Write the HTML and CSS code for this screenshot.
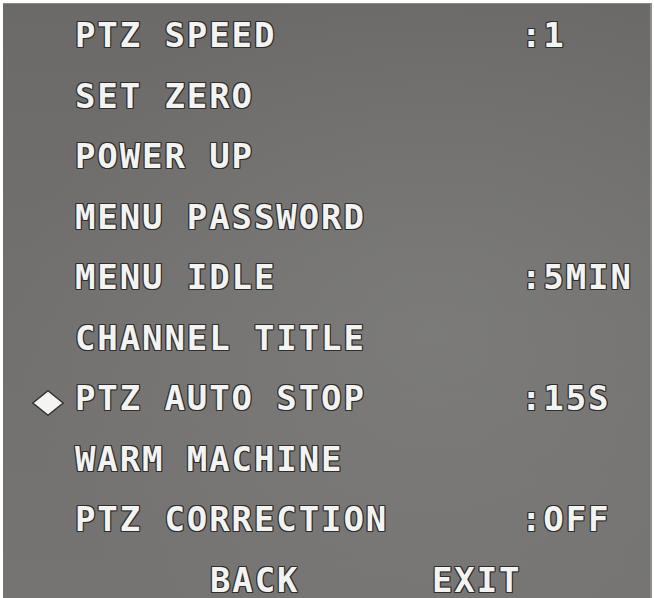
FILE: index.html
```html
<!DOCTYPE html>
<html>
<head>
<meta charset="utf-8">
<link rel="stylesheet" href="styles.css">
</head>
<body>
<div class="screen">
  <div class="menu">
    <div class="row"><span class="mark"></span><span class="label">PTZ SPEED</span><span class="value">:1</span></div>
    <div class="row"><span class="mark"></span><span class="label">SET ZERO</span><span class="value"></span></div>
    <div class="row"><span class="mark"></span><span class="label">POWER UP</span><span class="value"></span></div>
    <div class="row"><span class="mark"></span><span class="label">MENU PASSWORD</span><span class="value"></span></div>
    <div class="row"><span class="mark"></span><span class="label">MENU IDLE</span><span class="value">:5MIN</span></div>
    <div class="row"><span class="mark"></span><span class="label">CHANNEL TITLE</span><span class="value"></span></div>
    <div class="row selected"><span class="mark"><svg class="diamond" width="32" height="26" viewBox="0 0 32 26"><polygon points="16,0.8 31.2,13 16,25.2 0.8,13" fill="#f4f4f2" stroke="#2e2e2e" stroke-width="1.4" stroke-linejoin="round"/></svg></span><span class="label">PTZ AUTO STOP</span><span class="value">:15S</span></div>
    <div class="row"><span class="mark"></span><span class="label">WARM MACHINE</span><span class="value"></span></div>
    <div class="row"><span class="mark"></span><span class="label">PTZ CORRECTION</span><span class="value">:OFF</span></div>
    <div class="footer"><span class="btn back">BACK</span><span class="btn exit">EXIT</span></div>
  </div>
</div>
</body>
</html>
```

FILE: styles.css
```css
html, body {
  margin: 0;
  padding: 0;
  background: #ffffff;
}
body {
  width: 654px;
  height: 598px;
  overflow: hidden;
}
.screen {
  margin: 3px 0 0 3px;
  width: 649px;
  height: 595px;
  box-sizing: border-box;
  border-top: 1px solid #8a8a88;
  border-right: 2px solid #8e8e8c;
  background:
    radial-gradient(ellipse 420px 360px at 430px 330px, rgba(135,135,133,0.45), rgba(135,135,133,0) 100%),
    linear-gradient(180deg, #6b6a68 0%, #71706e 45%, #757472 100%);
  overflow: hidden;
}
.menu {
  padding-top: 1px;
  font-family: "DejaVu Sans Mono", "Liberation Mono", monospace;
  font-weight: bold;
  font-size: 34px;
  letter-spacing: 1.9px;
  color: #f3f3f1;
  text-shadow:
    1px 0 0 #2e2e2e, -1px 0 0 #2e2e2e, 0 1px 0 #2e2e2e, 0 -1px 0 #2e2e2e,
    1px 1px 0 #2e2e2e, -1px -1px 0 #2e2e2e, 1px -1px 0 #2e2e2e, -1px 1px 0 #2e2e2e;
}
.row {
  display: grid;
  grid-template-columns: 72px 446px 1fr;
  height: 60.5px;
  line-height: 60.5px;
  white-space: pre;
}
.mark {
  display: flex;
  align-items: center;
  justify-content: flex-start;
}
.diamond {
  display: block;
  flex: none;
  margin-left: 29px;
  margin-top: 9px;
}
.footer {
  display: flex;
  height: 60.5px;
  line-height: 60.5px;
  padding-left: 207px;
}
.back {
  width: 222px;
}
```
